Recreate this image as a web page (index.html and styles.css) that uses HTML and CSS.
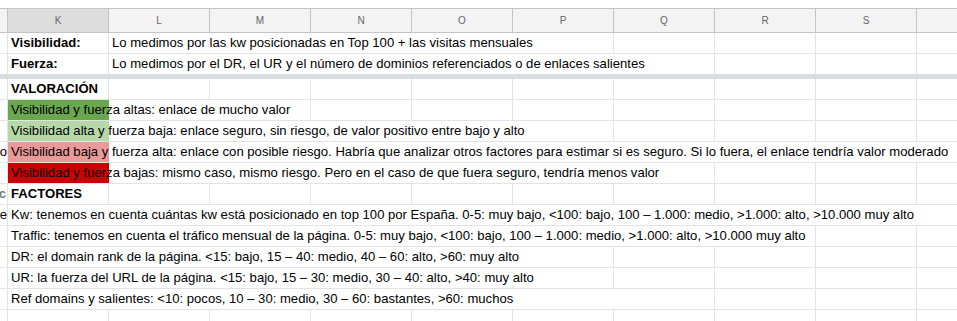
FILE: index.html
```html
<!DOCTYPE html>
<html lang="es">
<head>
<meta charset="utf-8">
<title>Hoja</title>
<link rel="stylesheet" href="styles.css">
</head>
<body>
<div class="sheet">
  <div class="top-gap"></div>
  <div class="row hdr">
    <div class="c"></div>
    <div class="c sel">K</div>
    <div class="c">L</div>
    <div class="c">M</div>
    <div class="c">N</div>
    <div class="c">O</div>
    <div class="c">P</div>
    <div class="c">Q</div>
    <div class="c">R</div>
    <div class="c">S</div>
    <div class="c"></div>
  </div>

  <div class="row">
    <div class="c j"></div>
    <div class="c b">Visibilidad:</div>
    <div class="c s5">Lo medimos por las kw posicionadas en Top 100 + las visitas mensuales</div>
    <div class="c"></div><div class="c"></div><div class="c"></div><div class="c"></div>
  </div>
  <div class="row nob">
    <div class="c j"></div>
    <div class="c b">Fuerza:</div>
    <div class="c s6">Lo medimos por el DR, el UR y el número de dominios referenciados o de enlaces salientes</div>
    <div class="c"></div><div class="c"></div><div class="c"></div>
  </div>
  <div class="band"></div>

  <div class="row">
    <div class="c j"></div>
    <div class="c b">VALORACIÓN</div>
    <div class="c"></div><div class="c"></div><div class="c"></div><div class="c"></div><div class="c"></div><div class="c"></div><div class="c"></div><div class="c"></div><div class="c"></div>
  </div>
  <div class="row">
    <div class="c j"></div>
    <div class="c s3 g1">Visibilidad y fuerza altas: enlace de mucho valor</div>
    <div class="c"></div><div class="c"></div><div class="c"></div><div class="c"></div><div class="c"></div><div class="c"></div><div class="c"></div>
  </div>
  <div class="row">
    <div class="c j"></div>
    <div class="c s6 g2">Visibilidad alta y fuerza baja: enlace seguro, sin riesgo, de valor positivo entre bajo y alto</div>
    <div class="c"></div><div class="c"></div><div class="c"></div><div class="c"></div>
  </div>
  <div class="row">
    <div class="c j"><span>ro</span></div>
    <div class="c s10 r1">Visibilidad baja y fuerza alta: enlace con posible riesgo. Habría que analizar otros factores para estimar si es seguro. Si lo fuera, el enlace tendría valor moderado</div>
  </div>
  <div class="row">
    <div class="c j"></div>
    <div class="c s7 r2">Visibilidad y fuerza bajas: mismo caso, mismo riesgo. Pero en el caso de que fuera seguro, tendría menos valor</div>
    <div class="c"></div><div class="c"></div><div class="c"></div>
  </div>
  <div class="row">
    <div class="c j"><span class="jb">c</span></div>
    <div class="c b">FACTORES</div>
    <div class="c"></div><div class="c"></div><div class="c"></div><div class="c"></div><div class="c"></div><div class="c"></div><div class="c"></div><div class="c"></div><div class="c"></div>
  </div>
  <div class="row">
    <div class="c j"><span>e</span></div>
    <div class="c s10">Kw: tenemos en cuenta cuántas kw está posicionado en top 100 por España. 0-5: muy bajo, &lt;100: bajo, 100 – 1.000: medio, &gt;1.000: alto, &gt;10.000 muy alto</div>
  </div>
  <div class="row">
    <div class="c j"></div>
    <div class="c s8">Traffic: tenemos en cuenta el tráfico mensual de la página. 0-5: muy bajo, &lt;100: bajo, 100 – 1.000: medio, &gt;1.000: alto, &gt;10.000 muy alto</div>
    <div class="c"></div><div class="c"></div>
  </div>
  <div class="row">
    <div class="c j"></div>
    <div class="c s6">DR: el domain rank de la página. &lt;15: bajo, 15 – 40: medio, 40 – 60: alto, &gt;60: muy alto</div>
    <div class="c"></div><div class="c"></div><div class="c"></div><div class="c"></div>
  </div>
  <div class="row">
    <div class="c j"></div>
    <div class="c s6">UR: la fuerza del URL de la página. &lt;15: bajo, 15 – 30: medio, 30 – 40: alto, &gt;40: muy alto</div>
    <div class="c"></div><div class="c"></div><div class="c"></div><div class="c"></div>
  </div>
  <div class="row">
    <div class="c j"></div>
    <div class="c s7">Ref domains y salientes: &lt;10: pocos, 10 – 30: medio, 30 – 60: bastantes, &gt;60: muchos</div>
    <div class="c"></div><div class="c"></div><div class="c"></div>
  </div>
  <div class="row">
    <div class="c j"></div>
    <div class="c"></div><div class="c"></div><div class="c"></div><div class="c"></div><div class="c"></div><div class="c"></div><div class="c"></div><div class="c"></div><div class="c"></div><div class="c"></div>
  </div>
</div>
</body>
</html>
```

FILE: styles.css
```css
html, body {
  margin: 0;
  padding: 0;
  background: #ffffff;
  overflow: hidden;
}

.sheet {
  width: 957px;
  font-family: "Liberation Sans", Arial, sans-serif;
  font-size: 13.1px;
  color: #000000;
}

.top-gap {
  height: 8px;
  background: #ffffff;
}

.row {
  display: grid;
  grid-template-columns: 8px repeat(9, 101px) 1fr;
  height: 21px;
}

.row .c {
  box-sizing: border-box;
  border-right: 1px solid #e2e3e3;
  border-bottom: 1px solid #e2e3e3;
  white-space: nowrap;
  overflow: hidden;
  display: flex;
  align-items: flex-end;
  padding: 0 0 3px 3px;
  line-height: 15px;
  min-width: 0;
}

.row.nob {
  height: 20px;
}

.row.nob .c {
  border-bottom: none;
}

.row .c:last-child {
  border-right: none;
}

.row .c.j {
  padding: 0 0 3px 0;
  justify-content: flex-end;
}

.row .c.j span {
  flex: none;
}

.row .c.j .jb {
  font-weight: bold;
  color: #777777;
  margin-right: 1px;
}

.hdr {
  height: 25px;
}

.hdr .c {
  border-top: 1px solid #c4c4c4;
  border-right: 1px solid #c4c4c4;
  border-bottom: 1px solid #c4c4c4;
  background: #f3f3f3;
  justify-content: center;
  align-items: center;
  padding: 0;
  font-size: 10px;
  color: #666666;
}

.hdr .c.sel {
  background: #dddddd;
}

.band {
  height: 5px;
  background: #d9dde3;
}

.b {
  font-weight: bold;
}

.s3 { grid-column: span 3; }
.s5 { grid-column: span 5; }
.s6 { grid-column: span 6; }
.s7 { grid-column: span 7; }
.s8 { grid-column: span 8; }
.s10 { grid-column: span 10; }

.g1 { background: linear-gradient(90deg, #6aa84f 0 101px, #ffffff 101px); }
.g2 { background: linear-gradient(90deg, #b6d7a8 0 101px, #ffffff 101px); }
.r1 { background: linear-gradient(90deg, #ea9999 0 101px, #ffffff 101px); }
.r2 { background: linear-gradient(90deg, #cc0000 0 101px, #ffffff 101px); }
```
